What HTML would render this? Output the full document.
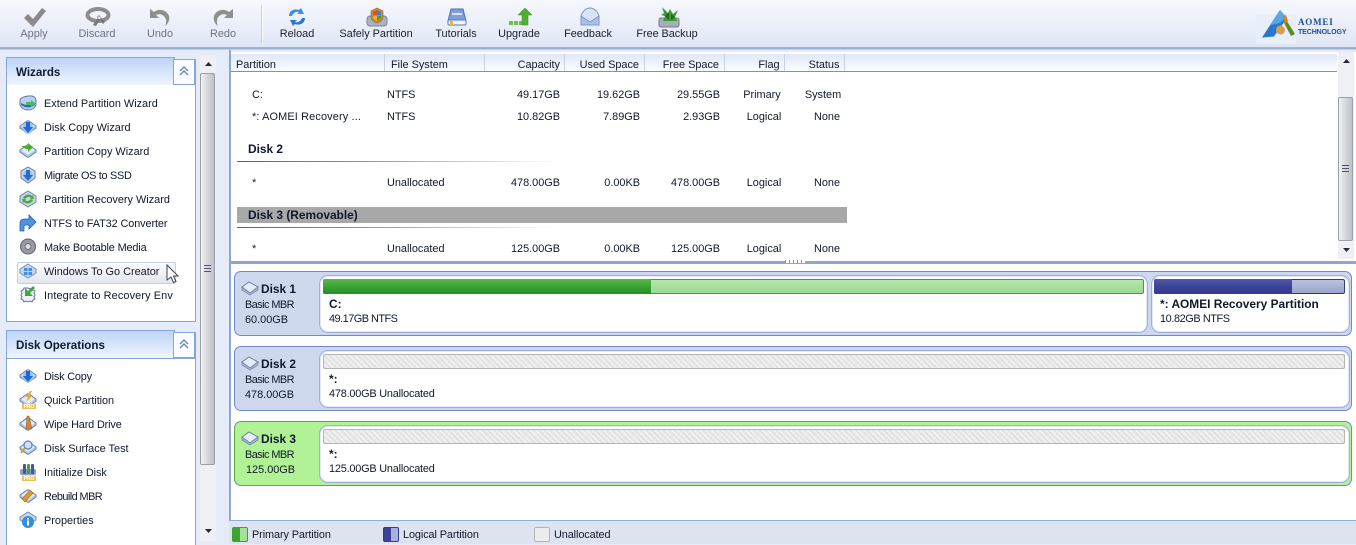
<!DOCTYPE html>
<html><head><meta charset="utf-8"><style>
html,body{margin:0;padding:0}
body{position:relative;width:1356px;height:544px;overflow:hidden;background:#e5ebf9;font:10.9px/18px "Liberation Sans",sans-serif;color:#10182c}
div,span,svg{position:absolute;white-space:nowrap}
.tb{top:25px;text-align:center;width:90px;color:#1a1f2e}
.dis{color:#6d7280}
.it{left:44px}
.ic{left:19px}
.r{text-align:right;width:80px}
.c{text-align:center;width:60px}
.h{top:56px}
.sep{top:54px;width:1px;height:17px;background:#c3d2e8}
b{font-weight:bold;font-size:11.9px;position:relative;top:-1px}
.ttl{left:16px;font-weight:bold;font-size:11.6px;color:#0c1a34}
.card{left:234px;width:1116px;height:63px;border:1px solid #7488c8;border-radius:7px;background:#cdd8ef}
.pt{background:#fff;border:1px solid #a0aed8;border-radius:9px;box-shadow:0 0 0 1px #e4e9f6 inset}
.bar{height:13px;border:1px solid #b4b4b0;border-radius:2px;background:repeating-linear-gradient(45deg,#e2e2e2 0 2px,#f0f0f0 2px 4px)}
</style></head><body>

<!-- toolbar -->
<div style="left:0;top:0;width:1356px;height:47px;background:linear-gradient(#f6f8fd,#dfe6f6)"></div>
<div style="left:0;top:47px;width:1356px;height:3px;background:linear-gradient(#a9bcdb,#8faace,#d4dff3)"></div>
<div style="left:261px;top:5px;width:1px;height:39px;background:#c6cfe0;box-shadow:1px 0 #fff"></div>

<svg style="left:24px;top:8px" width="22" height="19" viewBox="0 0 22 19"><path d="M0 10l4-4 5 5L18 0l4 3L9 19z" fill="#8a8a8a"/></svg>
<div class="tb dis" style="left:-11px">Apply</div>
<svg style="left:85px;top:7px" width="26" height="20" viewBox="0 0 26 20"><ellipse cx="13" cy="8" rx="10.500" ry="6" fill="none" stroke="#8d8d8d" stroke-width="4"/><path d="M8 18l6-9 2 2-5 8zM12 10l6 7 2-2-6-7z" fill="#777"/></svg>
<div class="tb dis" style="left:52px">Discard</div>
<svg style="left:149px;top:8px" width="22" height="19" viewBox="0 0 22 19"><path d="M1 1v9h9L7 7c4-2 9 0 10 5 .3 2 0 4-1 6 3-2 5-6 4-10C18 2 10 0 5 4z" fill="#8f8f8f"/></svg>
<div class="tb dis" style="left:115px">Undo</div>
<svg style="left:212px;top:8px" width="22" height="19" viewBox="0 0 22 19"><path d="M21 1v9h-9l3-3c-4-2-9 0-10 5-.3 2 0 4 1 6-3-2-5-6-4-10C4 2 12 0 17 4z" fill="#8f8f8f"/></svg>
<div class="tb dis" style="left:178px">Redo</div>

<svg style="left:287px;top:8px" width="20" height="18" viewBox="0 0 20 18"><path d="M2 8C2 3 7 0 12 2l2-2 3 6h-7l2-2C9 3 6 5 5 8z" fill="#3f8fdc"/><path d="M18 10c0 5-5 8-10 6l-2 2-3-6h7l-2 2c3 1 6-1 7-4z" fill="#2f77c8"/></svg>
<div class="tb" style="left:252px">Reload</div>
<svg style="left:366px;top:7px" width="22" height="20" viewBox="0 0 22 20"><rect x="1" y="9" width="20" height="10" rx="3" fill="#a8b2c4" stroke="#7c8698"/><path d="M11 1l6 3v6c0 3-3 5-6 6-3-1-6-3-6-6V4z" fill="#c98a3a" stroke="#8a6a3a" stroke-width=".6"/><path d="M11 3v5H7V5z" fill="#d4552c"/><path d="M11 3l4 2v3h-4z" fill="#3f7fd0"/><path d="M7 9h4v5c-2-1-4-2-4-5z" fill="#e0b830"/><path d="M11 9h4c0 3-2 4-4 5z" fill="#4a9a3a"/></svg>
<div class="tb" style="left:331px">Safely Partition</div>
<svg style="left:447px;top:8px" width="20" height="18" viewBox="0 0 20 18"><path d="M4 1h12l3 12H1z" fill="#7f9edc" stroke="#4f6fb8"/><rect x="5" y="5" width="10" height="2" fill="#d9e3f6"/><rect x="1" y="12" width="18" height="5" rx="1" fill="#f2f4f9" stroke="#5878c0"/><rect x="3" y="13" width="3" height="4" fill="#e8b040"/></svg>
<div class="tb" style="left:411px">Tutorials</div>
<svg style="left:508px;top:7px" width="25" height="19" viewBox="0 0 25 19"><rect x="1" y="14" width="4" height="4" fill="#6cc04a"/><rect x="6" y="14" width="4" height="4" fill="#6cc04a"/><rect x="11" y="14" width="4" height="4" fill="#6cc04a"/><path d="M17 1l7 7h-4v10h-6V8h-4z" fill="#52ae32" stroke="#3b8a22" stroke-width=".5"/></svg>
<div class="tb" style="left:474px">Upgrade</div>
<svg style="left:580px;top:7px" width="20" height="19" viewBox="0 0 20 19"><path d="M1 9C3 3 7 1 10 1s7 2 9 8v9H1z" fill="#d8e4f6" stroke="#7d97c8"/><path d="M1 9l9 6 9-6v9H1z" fill="#a9c0e8" stroke="#7d97c8"/></svg>
<div class="tb" style="left:543px">Feedback</div>
<svg style="left:658px;top:7px" width="22" height="21" viewBox="0 0 22 21"><rect x="1" y="11" width="20" height="9" rx="2" fill="#a6aeb8" stroke="#747c88"/><path d="M4 0l6 6 2-4 3 5 5-4-3 7 2 4H5l2-5-4-1 3-2z" fill="#3f9a36"/><path d="M11 5l-4 4 4 4zM13 7l4 3-4 3z" fill="#1e6a1c"/></svg>
<div class="tb" style="left:622px;letter-spacing:-.05px">Free Backup</div>

<!-- logo -->
<div style="left:1256px;top:14px;width:40px;height:30px;background:#e9effa"></div>
<svg style="left:1256px;top:8px" width="42" height="32" viewBox="0 0 42 32"><path d="M24 2L6 29.500l12-1L31 10z" fill="#2a78cc"/><path d="M24 2l-10 15 10-2 6-6z" fill="#5aa6e6"/><path d="M29 10l-2 3 8 15 4-2z" fill="#5c8a26"/><path d="M27 9l3-2 2 6-3 3z" fill="#c8842c"/><circle cx="24.500" cy="22" r="4.500" fill="#dc9c4a"/></svg>
<div style="left:1298px;top:16px;font:bold 9px/12px 'Liberation Serif',serif;color:#1c4c9a;letter-spacing:.8px">AOMEI</div>
<div style="left:1298px;top:27px;font:bold 7px/11px 'Liberation Sans',sans-serif;color:#1c4c9a;letter-spacing:-.1px">TECHNOLOGY</div>

<!-- left panel -->
<div style="left:6px;top:59px;width:188px;height:261px;background:#fff;border:1px solid #86a6d8"></div>
<div style="left:6px;top:57px;width:167px;height:27px;border:1px solid #86a6d8;border-bottom:0;background:linear-gradient(#bcd4f6,#f0f5fe)"></div>
<div style="left:173px;top:59px;width:22px;height:26px;box-sizing:border-box;border:1px solid #86a6d8;background:#fafcff"></div>
<svg style="left:178px;top:66px" width="12" height="10" viewBox="0 0 12 10"><path d="M2 5l4-4 4 4M2 9l4-4 4 4" fill="none" stroke="#6a88b0" stroke-width="1.400"/></svg>
<div class="ttl" style="top:64px">Wizards</div>

<div style="left:17px;top:262px;width:157px;height:20px;border:1px solid #c5d0e2;border-radius:2px;background:linear-gradient(#fdfdfe,#e2e6ee)"></div>

<svg width="0" height="0" style="left:0;top:0"><defs>
<g id="d"><path d="M1 8l7-5q1-.6 2 0l7 5v2l-7 5q-1 .6-2 0l-7-5z" fill="#b6c8e6" stroke="#6a80aa"/><path d="M2 8l7-4.500L16 8l-7 5z" fill="#e4ecf8"/></g>
<g id="p"><rect x="3" y="12.500" width="14" height="5.500" fill="#eac060"/><text x="10" y="17" font-family="Liberation Sans" font-weight="bold" font-size="5" fill="#fff" text-anchor="middle">PRO</text></g>
</defs></svg>

<svg class="ic" style="top:94px" width="18" height="18" viewBox="0 0 18 18"><path d="M1 6q1-3 8-4t8 4v5q-2 5-8 5t-8-5z" fill="#bcd0ee" stroke="#5a7aaa"/><path d="M2 11q7 5 14 0v-2q-7 4-14 0z" fill="#3f6ca8"/><path d="M7 8h5V6l5 3.500-5 3.500v-2H7z" fill="#3fc06a"/></svg>
<div class="it" style="top:95px">Extend Partition Wizard</div>
<svg class="ic" style="top:118px" width="18" height="18" viewBox="0 0 18 18"><use href="#d"/><circle cx="9" cy="10" r="5.500" fill="#9cc4f2"/><path d="M7 4h4v5h3l-5 6-5-6h3z" fill="#1f6ad0"/></svg>
<div class="it" style="top:119px">Disk Copy Wizard</div>
<svg class="ic" style="top:142px" width="18" height="18" viewBox="0 0 18 18"><use href="#d"/><path d="M2 4h7V1l5 4-5 5V7H7z" fill="#4aaa2e"/></svg>
<div class="it" style="top:143px">Partition Copy Wizard</div>
<svg class="ic" style="top:166px" width="18" height="18" viewBox="0 0 18 18"><path d="M9 1l7 4v7l-7 5-7-5V5z" fill="#c4d4ee" stroke="#6b7fa8"/><circle cx="9" cy="9.500" r="5" fill="#9cc4f2"/><path d="M7 4h4v5h3l-5 6-5-6h3z" fill="#2a6cc4"/></svg>
<div class="it" style="top:167px;letter-spacing:-.3px">Migrate OS to SSD</div>
<svg class="ic" style="top:190px" width="18" height="18" viewBox="0 0 18 18"><path d="M9 1l8 5v6l-8 5-8-5V6z" fill="#c6d4ea" stroke="#7085a8"/><path d="M4 8c1-3 6-5 9-2l1-1 1 4h-4l1-1c-2-2-4-1-6 1zM14 10c-1 3-6 5-9 2l-1 1-1-4h4l-1 1c2 2 4 1 6-1z" fill="#48ab3c"/></svg>
<div class="it" style="top:191px">Partition Recovery Wizard</div>
<svg class="ic" style="top:214px" width="18" height="18" viewBox="0 0 18 18"><path d="M1 17V9c0-3 2-4 5-4h4V1l7 7-7 7v-4H7c-2 0-2 1-2 2v4z" fill="#4f92e0" stroke="#2a5fa8" stroke-width=".8"/></svg>
<div class="it" style="top:215px;letter-spacing:-.1px">NTFS to FAT32 Converter</div>
<svg class="ic" style="top:238px" width="18" height="18" viewBox="0 0 18 18"><circle cx="9" cy="8.500" r="7.500" fill="#9a9aa6" stroke="#5f5f6a"/><circle cx="9" cy="8.500" r="3" fill="#dcdce2" stroke="#6f6f78"/></svg>
<div class="it" style="top:239px;letter-spacing:-.15px">Make Bootable Media</div>
<svg class="ic" style="top:262px" width="18" height="18" viewBox="0 0 18 18"><path d="M9 2l8 5v4l-8 5-8-5V7z" fill="#c4d4ee" stroke="#7f93b8"/><path d="M5 6h3.500v3H5zM9.500 6H13v3H9.500zM5 10h3.500v3H5zM9.500 10H13v3H9.500z" fill="#3f8fe6"/></svg>
<div class="it" style="top:263px">Windows To Go Creator</div>
<svg class="ic" style="top:286px" width="18" height="18" viewBox="0 0 18 18"><path d="M9 2l2 1 2-1 1 2 2 1-1 2 1 2-1 2 1 2-2 1-1 2-2-1-2 1-2-1-2 1-1-2-2-1 1-2-1-2 1-2-1-2 2-1 1-2z" fill="#eef2f8" stroke="#66789a"/><path d="M16 2l-5 5 3 3H6V2l3 3 5-5z" fill="#3fa83a"/></svg>
<div class="it" style="top:287px;letter-spacing:.12px">Integrate to Recovery Env</div>

<svg style="left:166px;top:264px" width="13" height="20" viewBox="0 0 13 20"><path d="M1 1v15l4-3 2.500 5.500 2.500-1L7.500 12H12z" fill="#fff" stroke="#35445f" stroke-width="1"/></svg>

<div style="left:6px;top:332px;width:188px;height:212px;background:#fff;border:1px solid #86a6d8;border-bottom:0"></div>
<div style="left:6px;top:330px;width:167px;height:27px;border:1px solid #86a6d8;border-bottom:0;background:linear-gradient(#bcd4f6,#f0f5fe)"></div>
<div style="left:173px;top:332px;width:22px;height:26px;box-sizing:border-box;border:1px solid #86a6d8;background:#fafcff"></div>
<svg style="left:178px;top:339px" width="12" height="10" viewBox="0 0 12 10"><path d="M2 5l4-4 4 4M2 9l4-4 4 4" fill="none" stroke="#6a88b0" stroke-width="1.400"/></svg>
<div class="ttl" style="top:337px">Disk Operations</div>
<div style="left:7px;top:358px;width:188px;height:1px;background:#86a6d8"></div>

<svg class="ic" style="top:367px" width="18" height="18" viewBox="0 0 18 18"><use href="#d"/><circle cx="9" cy="10" r="5.500" fill="#9cc4f2"/><path d="M7 4h4v5h3l-5 6-5-6h3z" fill="#1f6ad0"/></svg>
<div class="it" style="top:368px;letter-spacing:-.2px">Disk Copy</div>
<svg class="ic" style="top:391px" width="18" height="18" viewBox="0 0 18 18"><use href="#d"/><path d="M11 0L6 6h3L7 11l6-6h-3l3-5z" fill="#e8a838"/><use href="#p"/></svg>
<div class="it" style="top:392px;letter-spacing:-.05px">Quick Partition</div>
<svg class="ic" style="top:415px" width="18" height="18" viewBox="0 0 18 18"><use href="#d"/><path d="M8 1h2l3 13H7z" fill="#c98a3a" stroke="#8a5a20" stroke-width=".5"/></svg>
<div class="it" style="top:416px;letter-spacing:-.15px">Wipe Hard Drive</div>
<svg class="ic" style="top:439px" width="18" height="18" viewBox="0 0 18 18"><use href="#d"/><circle cx="9" cy="6" r="4" fill="#cfe2f8" stroke="#5a84bc" stroke-width="1.200"/><path d="M6 9l-4 5" stroke="#d69a30" stroke-width="2"/></svg>
<div class="it" style="top:440px">Disk Surface Test</div>
<svg class="ic" style="top:463px" width="18" height="18" viewBox="0 0 18 18"><rect x="1" y="6" width="16" height="6" rx="2" fill="#8a9cc0"/><rect x="4" y="1" width="3" height="10" rx="1" fill="#3c5f90"/><rect x="8" y="1" width="3" height="10" rx="1" fill="#4f9a4a"/><rect x="12" y="1" width="3" height="10" rx="1" fill="#3c5f90"/><use href="#p"/></svg>
<div class="it" style="top:464px;letter-spacing:-.05px">Initialize Disk</div>
<svg class="ic" style="top:487px" width="18" height="18" viewBox="0 0 18 18"><use href="#d"/><path d="M3 12L11 3l3 3-8 9z" fill="#d89a34" stroke="#9a6a1c" stroke-width=".6"/></svg>
<div class="it" style="top:488px;letter-spacing:-.55px">Rebuild MBR</div>
<svg class="ic" style="top:511px" width="18" height="18" viewBox="0 0 18 18"><path d="M1 6l8-5 8 5v3l-8 5-8-5z" fill="#c8d6ec" stroke="#7a8eb0"/><circle cx="9" cy="11" r="6" fill="#2f8fe0"/><rect x="8" y="9.500" width="2" height="5" fill="#fff"/><rect x="8" y="7" width="2" height="1.500" fill="#fff"/></svg>
<div class="it" style="top:512px">Properties</div>

<!-- left scrollbar -->
<div style="left:200px;top:55px;width:16px;height:486px;background:#eef0f4"></div>
<svg style="left:204px;top:61px" width="9" height="6"><path d="M4.500 1L8 5H1z" fill="#2a2440"/></svg>
<div style="left:200px;top:73px;width:15px;height:392px;box-sizing:border-box;border:1px solid #9aa0a8;border-radius:2px;background:linear-gradient(90deg,#f2f3f4,#cfd2d6 60%,#bfc2c6)"></div>
<div style="left:204px;top:265px;width:7px;height:7px;background:repeating-linear-gradient(#554a70 0 1px,transparent 1px 3px)"></div>
<svg style="left:204px;top:528px" width="9" height="6"><path d="M4.500 5L8 1H1z" fill="#2a2440"/></svg>

<!-- right frame -->
<div style="left:229px;top:50px;width:1127px;height:494px;background:#fff;border-left:2px solid #8fa6d0;box-sizing:border-box"></div>
<div style="left:231px;top:50px;width:1125px;height:2px;background:#e5ebf9"></div>
<div style="left:231px;top:54px;width:1106px;height:17px;background:linear-gradient(#dfe8f7,#fbfcff)"></div>
<div style="left:231px;top:71px;width:1106px;height:1px;background:#6f96cc"></div>
<div class="sep" style="left:384px"></div><div class="sep" style="left:484px"></div><div class="sep" style="left:564px"></div><div class="sep" style="left:644px"></div><div class="sep" style="left:724px"></div><div class="sep" style="left:784px"></div><div class="sep" style="left:844px"></div>

<div class="h" style="left:236px">Partition</div>
<div class="h" style="left:391px">File System</div>
<div class="h r" style="left:480px">Capacity</div>
<div class="h r" style="left:559px">Used Space</div>
<div class="h r" style="left:639px">Free Space</div>
<div class="h c" style="left:739px">Flag</div>
<div class="h c" style="left:794px">Status</div>

<div style="left:252px;top:86px">C:</div><div style="left:387px;top:86px">NTFS</div>
<div class="r" style="left:480px;top:86px">49.17GB</div><div class="r" style="left:560px;top:86px">19.62GB</div><div class="r" style="left:640px;top:86px">29.55GB</div>
<div class="c" style="left:732px;top:86px">Primary</div><div class="c" style="left:793px;top:86px">System</div>

<div style="left:252px;top:108px;letter-spacing:.15px">*: AOMEI Recovery ...</div><div style="left:387px;top:108px">NTFS</div>
<div class="r" style="left:480px;top:108px">10.82GB</div><div class="r" style="left:560px;top:108px">7.89GB</div><div class="r" style="left:640px;top:108px">2.93GB</div>
<div class="c" style="left:734px;top:108px">Logical</div><div class="c" style="left:797px;top:108px">None</div>

<div style="left:248px;top:141px"><b>Disk 2</b></div>
<div style="left:237px;top:161px;width:320px;height:1px;background:linear-gradient(90deg,#3a62b4,#6f9ad0 40%,#fff)"></div>

<div style="left:252px;top:174px">*</div><div style="left:387px;top:174px">Unallocated</div>
<div class="r" style="left:480px;top:174px">478.00GB</div><div class="r" style="left:560px;top:174px">0.00KB</div><div class="r" style="left:640px;top:174px">478.00GB</div>
<div class="c" style="left:734px;top:174px">Logical</div><div class="c" style="left:797px;top:174px">None</div>

<div style="left:237px;top:207px;width:610px;height:16px;background:#a8a8a8"></div>
<div style="left:248px;top:207px"><b>Disk 3 (Removable)</b></div>
<div style="left:237px;top:227px;width:320px;height:1px;background:linear-gradient(90deg,#3a62b4,#6f9ad0 40%,#fff)"></div>

<div style="left:252px;top:240px">*</div><div style="left:387px;top:240px">Unallocated</div>
<div class="r" style="left:480px;top:240px">125.00GB</div><div class="r" style="left:560px;top:240px">0.00KB</div><div class="r" style="left:640px;top:240px">125.00GB</div>
<div class="c" style="left:734px;top:240px">Logical</div><div class="c" style="left:797px;top:240px">None</div>

<!-- table scrollbar -->
<div style="left:1338px;top:52px;width:16px;height:207px;background:#eef0f4"></div>
<svg style="left:1342px;top:58px" width="9" height="6"><path d="M4.500 1L8 5H1z" fill="#2a2440"/></svg>
<div style="left:1338px;top:97px;width:15px;height:144px;box-sizing:border-box;border:1px solid #9aa0a8;border-radius:2px;background:linear-gradient(90deg,#f2f3f4,#cfd2d6 60%,#bfc2c6)"></div>
<div style="left:1342px;top:165px;width:7px;height:7px;background:repeating-linear-gradient(#554a70 0 1px,transparent 1px 3px)"></div>
<svg style="left:1342px;top:247px" width="9" height="6"><path d="M4.500 5L8 1H1z" fill="#2a2440"/></svg>

<!-- splitter -->
<div style="left:231px;top:261px;width:1125px;height:3px;background:#8fa6d0"></div>
<div style="left:785px;top:260px;width:20px;height:3px;background:repeating-linear-gradient(90deg,#7f93b8 0 1px,#fff 1px 4px)"></div>

<!-- Disk 1 -->
<div class="card" style="top:271px"></div>
<svg style="left:241px;top:281px" width="18" height="15" viewBox="0 0 18 15"><path d="M1 6l7-5 9 5-8 6z" fill="#e6edf8" stroke="#6f7f9f"/><path d="M1 6v3l8 5 8-5V6l-8 6z" fill="#a6b6d4" stroke="#6f7f9f" stroke-width=".7"/></svg>
<div style="left:261px;top:281px"><b>Disk 1</b></div>
<div style="left:245px;top:296px;letter-spacing:-.55px">Basic MBR</div>
<div style="left:245px;top:311px">60.00GB</div>
<div class="pt" style="left:319px;top:275px;width:827px;height:56px"></div>
<div style="left:323px;top:279px;width:819px;height:13px;border:1px solid #3f9e35;border-radius:2px;background:linear-gradient(#b4e8a8,#9bd894)"></div>
<div style="left:323px;top:279px;width:328px;height:15px;border-radius:2px 0 0 2px;background:linear-gradient(#58b84a,#38a432 50%,#2c8a2a)"></div>
<div style="left:329px;top:296px"><b>C:</b></div>
<div style="left:329px;top:310px;letter-spacing:-.5px">49.17GB NTFS</div>
<div class="pt" style="left:1151px;top:275px;width:197px;height:56px"></div>
<div style="left:1154px;top:279px;width:189px;height:13px;border:1px solid #2f3c8c;border-radius:2px;background:linear-gradient(#b8c2e0,#98a4cc)"></div>
<div style="left:1154px;top:279px;width:138px;height:15px;border-radius:2px 0 0 2px;background:linear-gradient(#5058ac,#3c4498 50%,#343a8c)"></div>
<div style="left:1160px;top:296px"><b>*: AOMEI Recovery Partition</b></div>
<div style="left:1160px;top:310px;letter-spacing:-.4px">10.82GB NTFS</div>

<!-- Disk 2 -->
<div class="card" style="top:346px"></div>
<svg style="left:241px;top:356px" width="18" height="15" viewBox="0 0 18 15"><path d="M1 6l7-5 9 5-8 6z" fill="#e6edf8" stroke="#6f7f9f"/><path d="M1 6v3l8 5 8-5V6l-8 6z" fill="#a6b6d4" stroke="#6f7f9f" stroke-width=".7"/></svg>
<div style="left:261px;top:356px"><b>Disk 2</b></div>
<div style="left:245px;top:371px;letter-spacing:-.55px">Basic MBR</div>
<div style="left:245px;top:386px">478.00GB</div>
<div class="pt" style="left:319px;top:350px;width:1029px;height:56px"></div>
<div class="bar" style="left:323px;top:354px;width:1020px"></div>
<div style="left:329px;top:371px"><b>*:</b></div>
<div style="left:329px;top:385px;letter-spacing:-.2px">478.00GB Unallocated</div>

<!-- Disk 3 -->
<div class="card" style="top:421px;background:#b2f296;border-left-color:#5aa848"></div>
<svg style="left:241px;top:431px" width="18" height="15" viewBox="0 0 18 15"><path d="M1 6l7-5 9 5-8 6z" fill="#e6edf8" stroke="#6f7f9f"/><path d="M1 6v3l8 5 8-5V6l-8 6z" fill="#a6b6d4" stroke="#6f7f9f" stroke-width=".7"/></svg>
<div style="left:261px;top:431px"><b>Disk 3</b></div>
<div style="left:245px;top:446px;letter-spacing:-.55px">Basic MBR</div>
<div style="left:246px;top:461px">125.00GB</div>
<div class="pt" style="left:319px;top:425px;width:1029px;height:56px"></div>
<div class="bar" style="left:323px;top:429px;width:1020px"></div>
<div style="left:329px;top:446px"><b>*:</b></div>
<div style="left:329px;top:460px;letter-spacing:-.2px">125.00GB Unallocated</div>

<!-- status bar -->
<div style="left:229px;top:520px;width:1127px;height:24px;background:#dde4f0;border-top:1px solid #8ab0dc;box-sizing:border-box"></div>
<div style="left:232px;top:527px;width:14px;height:13px;border:1px solid #3f9e35;border-radius:2px;background:linear-gradient(90deg,#3aa632 50%,#a6e29c 50%)"></div>
<div style="left:252px;top:526px;letter-spacing:-.1px">Primary Partition</div>
<div style="left:383px;top:527px;width:14px;height:13px;border:1px solid #2f3c8c;border-radius:2px;background:linear-gradient(90deg,#3c4498 50%,#a8b2dc 50%)"></div>
<div style="left:403px;top:526px;letter-spacing:-.1px">Logical Partition</div>
<div style="left:534px;top:527px;width:14px;height:13px;border:1px solid #b4b4b0;border-radius:2px;background:#ececec"></div>
<div style="left:554px;top:526px;letter-spacing:-.1px">Unallocated</div>

</body></html>
